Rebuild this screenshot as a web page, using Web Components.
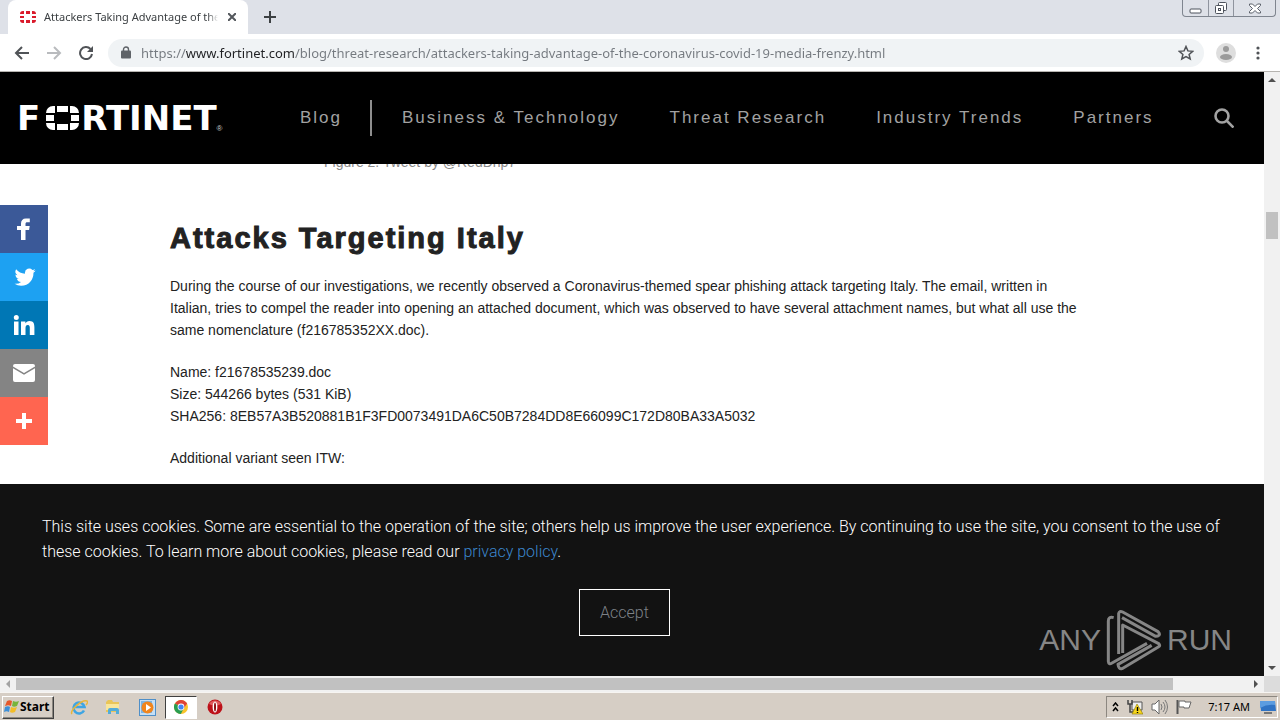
<!DOCTYPE html>
<html lang="en">
<head>
<meta charset="utf-8">
<title>Attackers Taking Advantage of the Coronavirus/COVID-19 Media Frenzy</title>
<style>
  body {
    margin: 0;
    height: 100vh;
    overflow: hidden;
    display: flex;
    flex-direction: column;
    background: #fff;
    font-family: "Liberation Sans", Arial, sans-serif;
  }
</style>
</head>
<body>
<tab-strip>
  <browser-tab>Attackers Taking Advantage of the Coronavirus</browser-tab>
</tab-strip>
<address-bar url="https://www.fortinet.com/blog/threat-research/attackers-taking-advantage-of-the-coronavirus-covid-19-media-frenzy.html"></address-bar>
<page-view>
  <site-header slot="header"></site-header>
  <blog-article>
    <span slot="caption">Figure 2: Tweet by @RedDrip7</span>
    <span slot="title">Attacks Targeting Italy</span>
    <p>During the course of our investigations, we recently observed a Coronavirus-themed spear phishing attack targeting Italy. The email, written in<br>Italian, tries to compel the reader into opening an attached document, which was observed to have several attachment names, but what all use the<br>same nomenclature (f216785352XX.doc).</p>
    <p>Name: f21678535239.doc<br>Size: 544266 bytes (531 KiB)<br>SHA256: 8EB57A3B520881B1F3FD0073491DA6C50B7284DD8E66099C172D80BA33A5032</p>
    <p>Additional variant seen ITW:</p>
  </blog-article>
  <share-rail slot="overlay"></share-rail>
  <cookie-notice slot="overlay">This site uses cookies. Some are essential to the operation of the site; others help us improve the user experience. By continuing to use the site, you consent to the use of these cookies. To learn more about cookies, please read our <a href="#privacy">privacy policy</a>.</cookie-notice>
  <run-mark slot="overlay"></run-mark>
</page-view>
<task-bar></task-bar>

<script>
class BaseElement extends HTMLElement {
  constructor() {
    super();
    this.attachShadow({ mode: 'open' });
  }

  connectedCallback() {
    const template = document.createElement('template');
    template.innerHTML = `<style>
      * { box-sizing: border-box; }
      button { padding: 0; border: 0; background: none; font: inherit; color: inherit; }
      a { color: inherit; text-decoration: none; }
      svg { display: block; flex: none; }
    </style>` + this.template();
    this.shadowRoot.innerHTML = '';
    this.shadowRoot.appendChild(template.content.cloneNode(true));
  }
}

class TabStrip extends BaseElement {
  template() {
    return `
      <style>
        :host {
          display: flex;
          align-items: flex-start;
          flex: none;
          height: 34px;
          padding: 0 4px 0 8px;
          background: #dee1e8;
        }
        .add { width: 44px; height: 34px; display: grid; place-items: center; }
        .controls {
          display: flex;
          margin-left: auto;
          height: 17px;
          border: 1px solid #7f858f;
          border-top: 0;
          border-radius: 0 0 4px 4px;
        }
        .controls button { width: 25px; display: grid; place-items: center; }
        .controls button + button { border-left: 1px solid #8f949e; }
        .controls button:last-child { width: 42px; }
      </style>
      <slot></slot>
      <button class="add" aria-label="New tab">
        <svg width="12" height="12" viewBox="0 0 12 12"><path d="M6 0v12M0 6h12" stroke="#3c4043" stroke-width="2"/></svg>
      </button>
      <div class="controls">
        <button aria-label="Minimize">
          <svg width="13" height="14" viewBox="0 0 13 14"><rect x="1" y="8" width="11" height="4" rx="1" fill="#fff" stroke="#4d525c"/></svg>
        </button>
        <button aria-label="Restore">
          <svg width="14" height="14" viewBox="0 0 14 14" fill="#fff" stroke="#4d525c"><rect x="4.500" y="1.500" width="8" height="8" rx="1"/><rect x="1.500" y="4.500" width="8" height="8" rx="1"/><rect x="4.500" y="7.500" width="2" height="2"/></svg>
        </button>
        <button aria-label="Close">
          <svg width="14" height="13" viewBox="0 0 14 13"><path d="M1.500 2h3L7 4.500 9.500 2h3v1.500L9.500 6.500l3 3V11h-3L7 8.500 4.500 11h-3V9.500l3-3-3-3z" fill="#fff" stroke="#5b606a"/></svg>
        </button>
      </div>
    `;
  }
}

class BrowserTab extends BaseElement {
  template() {
    return `
      <style>
        :host {
          display: flex;
          align-items: center;
          gap: 8px;
          width: 240px;
          height: 34px;
          box-sizing: border-box;
          padding: 0 10px 0 12px;
          border-radius: 8px 8px 0 0;
          background: #fff;
          color: #3c4043;
          font: 11px/16px "Noto Sans", "DejaVu Sans", sans-serif;
        }
        .title {
          flex: 1;
          overflow: hidden;
          white-space: nowrap;
          -webkit-mask-image: linear-gradient(90deg, #000 94%, transparent);
          mask-image: linear-gradient(90deg, #000 94%, transparent);
        }
        button { display: grid; place-items: center; width: 12px; height: 16px; }
      </style>
      <svg width="16" height="12" viewBox="0 0 16 12" fill="#da1a2b">
        <path d="M0 3a3 3 0 0 1 3-3h1v3H0zM6 0h4v3H6zM12 0h1a3 3 0 0 1 3 3h-4zM0 5h4v2H0zM12 5h4v2h-4zM0 9h4v3H3a3 3 0 0 1-3-3zM6 9h4v3H6zM12 9h4a3 3 0 0 1-3 3h-1z"/>
      </svg>
      <span class="title"><slot></slot></span>
      <button aria-label="Close tab">
        <svg width="8" height="8" viewBox="0 0 8 8"><path d="M0 0l8 8M8 0L0 8" stroke="#53575c" stroke-width="2"/></svg>
      </button>
    `;
  }
}

class AddressBar extends BaseElement {
  template() {
    return `
      <style>
        :host {
          display: flex;
          align-items: center;
          flex: none;
          height: 38px;
          box-sizing: border-box;
          padding: 0 14px;
          border-bottom: 1px solid #b6b4b0;
          background: #fff;
        }
        .nav { width: 16px; height: 28px; margin-right: 16px; display: grid; place-items: center; }
        .pill {
          flex: 1;
          display: flex;
          align-items: center;
          height: 28px;
          margin: 0 12px 0 -2px;
          padding: 0 10px 0 13px;
          border-radius: 14px;
          background: #f0f3f5;
        }
        /* the host name is darker than the rest of the address */
        input {
          --dim: #74797f;
          --host: #202124;
          flex: 1;
          min-width: 0;
          height: 28px;
          padding: 0;
          margin-left: 10px;
          border: 0;
          outline: 0;
          color: var(--dim);
          font: 13px/28px "Noto Sans", "DejaVu Sans", sans-serif;
          background: linear-gradient(90deg, var(--dim) 45px, var(--host) 45px, var(--host) 154px, var(--dim) 154px);
          -webkit-background-clip: text;
          background-clip: text;
          -webkit-text-fill-color: transparent;
        }
        .menu { width: 16px; margin-left: 14px; display: grid; place-items: center; }
      </style>
      <button class="nav" aria-label="Back">
        <svg width="16" height="14" viewBox="0 0 16 14" fill="none" stroke="#505357" stroke-width="2"><path d="M15 7H2M8 1L2 7l6 6"/></svg>
      </button>
      <button class="nav" aria-label="Forward">
        <svg width="16" height="14" viewBox="0 0 16 14" fill="none" stroke="#b9bbbe" stroke-width="2"><path d="M1 7h13M8 1l6 6-6 6"/></svg>
      </button>
      <button class="nav" aria-label="Reload">
        <svg width="14" height="14" viewBox="0 0 14 14"><path d="M11.500 3A6 6 0 1 0 13 8" fill="none" stroke="#505357" stroke-width="2"/><path d="M14 0v6H8z" fill="#505357"/></svg>
      </button>
      <div class="pill">
        <svg width="10" height="13" viewBox="0 0 10 13"><path d="M2.500 5V3.500a2.500 2.500 0 0 1 5 0V5" fill="none" stroke="#5f6368" stroke-width="1.400"/><rect y="4.500" width="10" height="8" rx="1" fill="#5f6368"/></svg>
        <input type="text" aria-label="Address" spellcheck="false" value="${this.getAttribute('url')}">
        <button aria-label="Bookmark this page">
          <svg width="16" height="16" viewBox="0 0 16 16"><path d="M8 1.500l1.900 4.400 4.800.4-3.600 3.100 1.100 4.600L8 11.500 3.800 14l1.100-4.600L1.300 6.300l4.800-.4z" fill="none" stroke="#505357" stroke-width="1.500"/></svg>
        </button>
      </div>
      <button aria-label="Profile">
        <svg width="20" height="20" viewBox="0 0 20 20"><circle cx="10" cy="10" r="10" fill="#dedede"/><circle cx="10" cy="6" r="3" fill="#9b9b9b"/><ellipse cx="10" cy="14" rx="6" ry="3" fill="#9b9b9b"/></svg>
      </button>
      <button class="menu" aria-label="Menu">
        <svg width="4" height="14" viewBox="0 0 4 14" fill="#505357"><circle cx="2" cy="2" r="1.600"/><circle cx="2" cy="7" r="1.600"/><circle cx="2" cy="12" r="1.600"/></svg>
      </button>
    `;
  }
}

class PageView extends BaseElement {
  template() {
    return `
      <style>
        :host {
          flex: 1;
          min-height: 0;
          display: grid;
          grid-template: minmax(0, 1fr) 16px / minmax(0, 1fr) 16px;
          background: #f1f1f1;
        }
        .page { position: relative; overflow: hidden; background: #fff; }
        .corner { background: #dcdcdc; }
      </style>
      <div class="page">
        <slot name="header"></slot>
        <slot></slot>
        <slot name="overlay"></slot>
      </div>
      <scroll-bar before="124" thumb="27" after="421"></scroll-bar>
      <scroll-bar horizontal before="0" thumb="1157" after="75"></scroll-bar>
      <div class="corner"></div>
    `;
  }
}

class ScrollBar extends BaseElement {
  template() {
    const horizontal = this.hasAttribute('horizontal');
    const grow = (name) => this.getAttribute(name);
    const arrows = horizontal
      ? ['M10 4v8L6 8z', 'M6 4v8l4-4z']
      : ['M4 10h8L8 6z', 'M4 6h8l-4 4z'];
    return `
      <style>
        :host { display: flex; flex-direction: column; background: #f1f1f1; }
        :host([horizontal]) { flex-direction: row; }
        .thumb { margin: 0 2px; background: #c1c1c1; }
        :host([horizontal]) .thumb { margin: 2px 0; }
      </style>
      <svg width="16" height="16" fill="${horizontal ? '#a3a3a3' : '#505050'}"><path d="${arrows[0]}"/></svg>
      <div style="flex: ${grow('before')}"></div>
      <div class="thumb" style="flex: ${grow('thumb')}"></div>
      <div style="flex: ${grow('after')}"></div>
      <svg width="16" height="16" fill="#505050"><path d="${arrows[1]}"/></svg>
    `;
  }
}

class SiteHeader extends BaseElement {
  template() {
    return `
      <style>
        /* stays over the article while it scrolls */
        :host {
          position: absolute;
          z-index: 1;
          top: 0;
          left: 0;
          right: 0;
          display: flex;
          align-items: center;
          height: 92px;
          box-sizing: border-box;
          padding: 0 30px 0 17px;
          background: #000;
          color: #a2a2a2;
          font-size: 17px;
          line-height: 24px;
          letter-spacing: 2px;
        }
        .logo {
          display: flex;
          align-items: center;
          width: 283px;
          color: #fff;
          font: bold 34px/32px "DejaVu Sans", sans-serif;
          letter-spacing: 0;
        }
        .logo svg { margin: 0 2px 0 6px; }
        .logo small { align-self: flex-end; font: 8px/10px "Liberation Sans", sans-serif; color: #ccc; }
        nav { display: flex; align-items: center; gap: 50px; white-space: nowrap; }
        .blog { padding: 6px 28px 6px 0; border-right: 2px solid #8e8e8e; margin-right: -20px; }
        .search { margin-left: auto; }
      </style>
      <a class="logo" href="#home">
        <span>F</span>
        <svg width="33" height="24" viewBox="0 0 33 24" fill="#fff">
          <path d="M0 7a7 7 0 0 1 7-7h2v7zM11 0h11v6H11zM24 0h2a7 7 0 0 1 7 7h-9zM0 9h8v6H0zM25 9h8v6h-8zM0 17h9v7H7a7 7 0 0 1-7-7zM11 18h11v6H11zM24 17h9a7 7 0 0 1-7 7h-2z"/>
        </svg>
        <span>RTINET</span>
        <small>®</small>
      </a>
      <nav>
        <a class="blog" href="#blog">Blog</a>
        <a href="#business">Business &amp; Technology</a>
        <a href="#research">Threat Research</a>
        <a href="#trends">Industry Trends</a>
        <a href="#partners">Partners</a>
      </nav>
      <button class="search" aria-label="Search">
        <svg width="20" height="20" viewBox="0 0 20 20" fill="none" stroke="#a2a2a2" stroke-width="2.600"><circle cx="8" cy="8" r="6.500"/><path d="M12.500 12.500l7 7"/></svg>
      </button>
    `;
  }
}

class BlogArticle extends BaseElement {
  template() {
    return `
      <style>
        :host {
          display: block;
          padding: 79px 170px 0;
          color: #222;
          font-size: 14px;
          line-height: 22px;
        }
        .caption { padding-left: 154px; color: #888; }
        h2 {
          margin: 48px 0 20px;
          font-size: 29px;
          line-height: 34px;
          letter-spacing: 2px;
          -webkit-text-stroke: 1px #222;
        }
        ::slotted(p) { margin: 0 0 20px; white-space: nowrap; }
      </style>
      <div class="caption"><slot name="caption"></slot></div>
      <h2><slot name="title"></slot></h2>
      <slot></slot>
    `;
  }
}

class ShareRail extends BaseElement {
  template() {
    const links = [
      ['Facebook', '#3b5998', '<path d="M20.500 5.500h-2.600C14.700 5.500 13 7.500 13 10.500V13h-4v4h4v10h4.500V17h3.600l.6-4h-4.200v-2c0-1.200.5-1.700 1.700-1.700h2.600v-3.800z"/>'],
      ['Twitter', '#1da1f2', '<path d="M28 8.600a10 10 0 0 1-2.800.8 5 5 0 0 0 2.200-2.700c-1 .5-2 1-3.100 1.200a4.900 4.900 0 0 0-8.500 3.300c0 .4 0 .8.100 1.100-4-.2-7.700-2.100-10.100-5.100a4.900 4.900 0 0 0 1.500 6.600c-.8 0-1.600-.2-2.200-.6v.1c0 2.400 1.700 4.400 3.900 4.800a5 5 0 0 1-2.200.1 4.900 4.900 0 0 0 4.600 3.400A9.900 9.900 0 0 1 4 23.600a14 14 0 0 0 7.500 2.200c9.100 0 14-7.500 14-14v-.6A10 10 0 0 0 28 8.600z" transform="translate(3 2) scale(.88)"/>'],
      ['LinkedIn', '#0077b5', '<path d="M6 12.500h4.500v13.600H6zM8.300 5.900a2.500 2.500 0 1 1 0 5 2.500 2.500 0 0 1 0-5M13 12.500h4.400v1.800h.1c.6-1 1.900-2.200 4-2.200 4.200 0 4.900 2.800 4.900 6.400v7.600h-4.600v-6.700c0-1.600 0-3.500-2-3.500s-2.300 1.700-2.300 3.400v6.800H13z"/>'],
      ['Email', '#848484', '<path d="M5 9.500V9a2 2 0 0 1 2-2h18a2 2 0 0 1 2 2v.5l-11 6.500zM5 11.200V23a2 2 0 0 0 2 2h18a2 2 0 0 0 2-2V11.200l-11 6.500z"/>'],
      ['More', '#ff6550', '<path d="M14 8h4v6h6v4h-6v6h-4v-6H8v-4h6z"/>']
    ];
    return `
      <style>
        :host { position: absolute; top: 133px; left: 0; display: flex; flex-direction: column; width: 48px; }
        a { display: grid; place-items: center; height: 48px; }
      </style>
      ${links.map(([name, color, icon]) => `
        <a href="#share" aria-label="${name}" style="background: ${color}">
          <svg width="32" height="32" viewBox="0 0 32 32" fill="#fff">${icon}</svg>
        </a>`).join('')}
    `;
  }
}

class CookieNotice extends BaseElement {
  template() {
    return `
      <style>
        :host {
          position: absolute;
          left: 0;
          right: 0;
          bottom: 0;
          height: 192px;
          box-sizing: border-box;
          display: flex;
          flex-direction: column;
          align-items: center;
          gap: 25px;
          padding: 30px 42px;
          background: #121212;
          color: #fff;
          font: 300 16px/25px Roboto, "Liberation Sans", sans-serif;
        }
        p { margin: 0; align-self: stretch; }
        ::slotted(a) { color: #3c86cc; text-decoration: none; }
        button { height: 47px; margin-right: 15px; padding: 0 20px; border: 1px solid #fff; color: #7d8187; }
      </style>
      <p><slot></slot></p>
      <button>Accept</button>
    `;
  }
}

class RunMark extends BaseElement {
  template() {
    return `
      <style>
        :host {
          position: absolute;
          right: 32px;
          bottom: 4px;
          display: flex;
          align-items: center;
          gap: 5px;
          color: #868686;
          font: 30px/64px "Liberation Sans Narrow", "Liberation Sans", sans-serif;
        }
      </style>
      <span>ANY</span>
      <svg width="56" height="62" viewBox="268 28 168 186" fill="none" stroke="#868686" stroke-width="9" stroke-linejoin="round">
        <path d="M291 54Q275 50 275 64V185Q276 196 286 190L391 131"/>
        <path d="M306 163V42Q308 32 318 37L424 96Q433 105 424 109L417 110L316 54"/>
        <path d="M318 160V76L426 132Q432 138 426 141L316 207Q306 210 304 194L405 137"/>
      </svg>
      <span>RUN</span>
    `;
  }
}

class TaskBar extends BaseElement {
  template() {
    return `
      <style>
        :host {
          display: flex;
          align-items: center;
          flex: none;
          height: 28px;
          box-sizing: border-box;
          padding: 1px 2px 0;
          border-top: 1px solid #f7f5f2;
          background: #d6cec5;
          color: #000;
          font: 11px/14px "Noto Sans", "DejaVu Sans", sans-serif;
        }
        .start {
          display: flex;
          align-items: center;
          width: 52px;
          height: 23px;
          padding-left: 1px;
          border: 1px solid;
          border-color: #fff #404040 #404040 #fff;
          box-shadow: inset -1px -1px #8c8780;
          font-size: 12px;
          font-weight: bold;
        }
        .apps { display: flex; align-items: center; margin-left: 8px; }
        .apps button { width: 34px; height: 23px; display: grid; place-items: center; }
        .apps .active { width: 32px; background: #fff; border: 1px solid; border-color: #404040 #fff #fff #404040; margin: 0 1px; }
        .tray {
          display: flex;
          align-items: center;
          gap: 8px;
          height: 22px;
          margin-left: auto;
          padding: 0 1px 0 5px;
          border: 1px solid;
          border-color: #8c8780 #fff #fff #8c8780;
        }
        time { margin: 0 2px 0 8px; white-space: nowrap; }
      </style>
      <button class="start">
        <svg width="16" height="16" viewBox="0 0 16 16">
          <path d="M3 2c2-1 3-1 5 0L7 7C5 6 4 6 1 7z" fill="#e5582b"/>
          <path d="M9 2c2 1 4 1 6 0l-2 5c-2 1-4 1-5 0z" fill="#78b43c"/>
          <path d="M1 8c2-1 4-1 5 0l-1 5c-2-1-3-1-5 0z" fill="#3d8fd8"/>
          <path d="M7 8c2 1 4 1 6 0l-2 5c-2 1-4 1-5 0z" fill="#f3bd28"/>
        </svg>
        Start
      </button>
      <div class="apps">
        <button aria-label="Internet Explorer">
          <svg width="18" height="18" viewBox="0 0 18 18" fill="none"><path d="M14 12.500A5.500 5.500 0 1 1 14.500 9H5" stroke="#3ea5e3" stroke-width="2.600"/><path d="M2 16C-1 13 12 1 17 3c1 1 0 3-1 4" stroke="#e8b63a" stroke-width="1.500"/></svg>
        </button>
        <button aria-label="Explorer">
          <svg width="18" height="18" viewBox="0 0 18 18"><path d="M2 4l2-2h4l1 2h6v10H2z" fill="#e9c558"/><path d="M2 6h13v6H2z" fill="#f9e69a"/><path d="M4 16v-4q0-2 2-2h7q2 0 2 2v4h-3v-3H7v3z" fill="#53acd8"/></svg>
        </button>
        <button aria-label="Media Player">
          <svg width="17" height="17" viewBox="0 0 17 17"><rect x=".5" y=".5" width="16" height="16" fill="#c5dff5" stroke="#4f8fc8"/><rect x="2" y="2" width="11" height="12" fill="#7db4e2"/><circle cx="8.500" cy="8.500" r="6" fill="#f1851c"/><path d="M7 5v7l5-3.500z" fill="#fff"/></svg>
        </button>
        <button class="active" aria-label="Chrome">
          <svg width="14" height="14" viewBox="0 0 14 14"><circle cx="7" cy="7" r="7" fill="#f9c42c"/><path d="M7 7L1 3.400A7 7 0 0 1 13.100 3.600z" fill="#df4337"/><path d="M7 7L.9 3.500A7 7 0 0 0 6.800 14l3-5.500z" fill="#2a9d51"/><path d="M7 3.600h6.100L10 8z" fill="#df4337"/><circle cx="7" cy="7" r="3.400" fill="#fff"/><circle cx="7" cy="7" r="2.600" fill="#4285f4"/></svg>
        </button>
        <button aria-label="Opera">
          <svg width="16" height="16" viewBox="0 0 16 16"><circle cx="8" cy="8" r="7.500" fill="#bd1119"/><path d="M2 5a7 7 0 0 1 12 0q-6 3-12 0" fill="#e05a5d"/><ellipse cx="8" cy="8" rx="2.400" ry="5.500" fill="#fff"/><ellipse cx="8" cy="8" rx="1" ry="4.500" fill="#8b0d12"/></svg>
        </button>
      </div>
      <div class="tray">
        <svg width="7" height="10" viewBox="0 0 7 10" fill="none" stroke="#000" stroke-width="1.500"><path d="M1 4l2.500-3L6 4M1 9l2.500-3L6 9"/></svg>
        <svg width="16" height="16" viewBox="0 0 16 16"><path d="M5 3h10v8H5z" fill="#eee" stroke="#555"/><path d="M1 1v4h4V1M3 5v8h4" fill="none" stroke="#444" stroke-width="1.500"/><path d="M10 5l6 10H5z" fill="#f6d51b" stroke="#8c7500" stroke-width=".6"/><path d="M10.500 8v4M10.500 13v1" stroke="#000" stroke-width="1.400"/></svg>
        <svg width="17" height="16" viewBox="0 0 17 16"><path d="M1 5h3l4-4v14l-4-4H1z" fill="#fff" stroke="#666"/><path d="M10 5q2 3 0 6M12 3q4 5 0 10M14 1q5 7 0 14" fill="none" stroke="#777"/></svg>
        <svg width="16" height="16" viewBox="0 0 16 16"><path d="M1.500 1v14" stroke="#555" stroke-width="2"/><path d="M3 2h6v1h6l-2 6H8V8H3z" fill="#fff" stroke="#666"/></svg>
        <time>7:17 AM</time>
        <svg width="16" height="14" viewBox="0 0 16 14"><path d="M0 1h15l1 10H1z" fill="#2f73c4"/><path d="M0 1h15v4Q7 4 0 8z" fill="#5b9ce0"/><path d="M4 12h8v2H4z" fill="#777"/></svg>
      </div>
    `;
  }
}

customElements.define('tab-strip', TabStrip);
customElements.define('browser-tab', BrowserTab);
customElements.define('address-bar', AddressBar);
customElements.define('scroll-bar', ScrollBar);
customElements.define('page-view', PageView);
customElements.define('site-header', SiteHeader);
customElements.define('blog-article', BlogArticle);
customElements.define('share-rail', ShareRail);
customElements.define('cookie-notice', CookieNotice);
customElements.define('run-mark', RunMark);
customElements.define('task-bar', TaskBar);
</script>
</body>
</html>
